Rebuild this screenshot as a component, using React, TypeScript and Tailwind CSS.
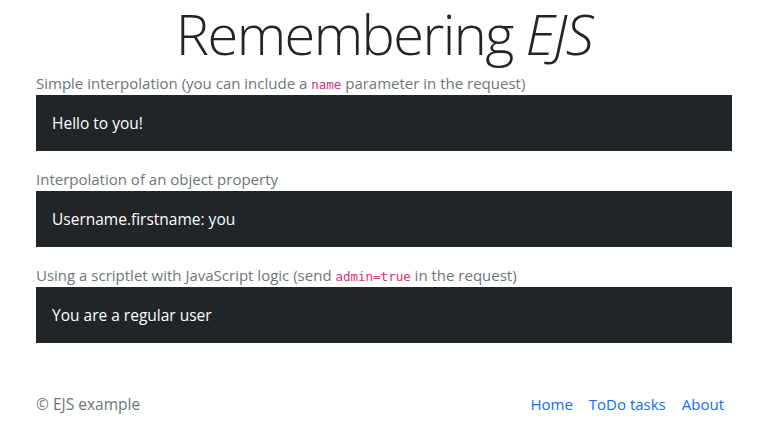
import React from "react";

const codeCls = "font-['DejaVu_Sans_Mono',monospace] text-[12.5px] leading-none text-[#d63384]";

const sections = [
  {
    label: (
      <>
        Simple interpolation (you can include a <code className={codeCls}>name</code> parameter in the request)
      </>
    ),
    output: "Hello to you!",
  },
  {
    label: <>Interpolation of an object property</>,
    output: "Username.firstname: you",
  },
  {
    label: (
      <>
        Using a scriptlet with JavaScript logic (send <code className={codeCls}>admin=true</code> in the request)
      </>
    ),
    output: "You are a regular user",
  },
];

export default function App() {
  return (
    <div className="min-h-screen bg-white font-['Open_Sans',sans-serif] text-[#212529]">
      <div className="ml-[36px] w-[696px]">
        <h1 className="pb-[5px] text-center text-[56px] font-light leading-[66px] tracking-[-1.6px]">
          Remembering <em>EJS</em>
        </h1>
        <div className="flex flex-col gap-4">
          {sections.map((s, i) => (
            <div key={i}>
              <p className="h-[24px] text-[15px] leading-[24px] text-[#6c757d]">{s.label}</p>
              <div className="bg-[#212529] p-4 text-[15.5px] leading-[24px] text-white">
                {s.output}
              </div>
            </div>
          ))}
        </div>
        <footer className="mt-[38px] flex items-center justify-between py-3">
          <p className="text-[15.5px] text-[#6c757d]">© EJS example</p>
          <nav className="flex text-[15px] text-[#0d6efd]">
            <a href="#" className="px-2">Home</a>
            <a href="#" className="px-2">ToDo tasks</a>
            <a href="#" className="px-2">About</a>
          </nav>
        </footer>
      </div>
    </div>
  );
}
